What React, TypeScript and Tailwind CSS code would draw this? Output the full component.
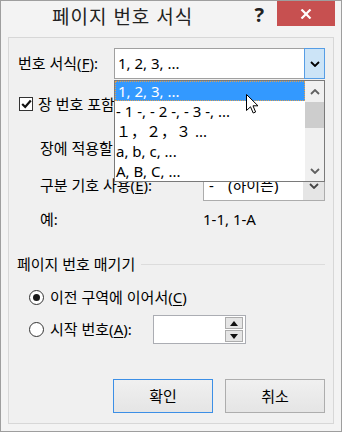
import React from "react";

const font = "font-['Noto_Sans','Noto_Sans_CJK_KR',sans-serif]";

function Chevron({ className = "", up = false }: { className?: string; up?: boolean }) {
  return (
    <svg width="10" height="6" viewBox="0 0 10 6" className={className}>
      <polyline
        points={up ? "1,5 5,1 9,5" : "1,1 5,5 9,1"}
        fill="none"
        stroke="currentColor"
        strokeWidth="1.8"
      />
    </svg>
  );
}

function Combo({ children, focused = false }: { children?: React.ReactNode; focused?: boolean }) {
  return (
    <div
      className={`flex h-[31px] flex-1 border bg-white ${
        focused ? "border-[#a0a0a0]" : "border-[#acacac]"
      }`}
    >
      <div className="flex flex-1 items-center pl-[3px] text-[15px] text-black">{children}</div>
      <div
        className={`flex w-[21px] items-center justify-center ${
          focused ? "-my-px -mr-px border border-[#569de5] bg-[#cce4f7] text-black" : "bg-[#e5e5e5] text-[#444]"
        }`}
      >
        <Chevron />
      </div>
    </div>
  );
}

function Mn({ c }: { c: string }) {
  return (
    <>
      (<span className="underline underline-offset-2">{c}</span>)
    </>
  );
}

function Cursor() {
  return (
    <svg width="13" height="20" viewBox="0 0 13 20" className="absolute left-[131px] top-[13px]">
      <path
        d="M0.5 0.5 L0.5 16.5 L4.5 12.8 L7.2 19 L9.6 18 L7 11.8 L12 11.8 Z"
        fill="white"
        stroke="black"
        strokeWidth="1"
        strokeLinejoin="round"
      />
    </svg>
  );
}

function DropList() {
  const items = ["- 1 -, - 2 -, - 3 -, ...", "１，２，３ ...", "a, b, c, ...", "A, B, C, ..."];
  return (
    <div className="absolute left-0 top-[32px] z-10 flex h-[102px] w-[211px] border border-[#7a7a7a] bg-white">
      <div className="flex flex-1 flex-col overflow-hidden text-[15px] text-black">
        <div className="flex h-[20px] items-center border border-dotted border-[#e0a050] bg-[#3399ff] pl-[2px] text-white">
          1, 2, 3, ...
        </div>
        {items.map((t) => (
          <div key={t} className="flex h-[20px] items-center pl-[1px] whitespace-pre">
            {t}
          </div>
        ))}
      </div>
      <div className="flex w-[19px] flex-col items-center bg-[#f0f0f0] text-[#606060]">
        <div className="flex h-[21px] items-center justify-center">
          <Chevron up />
        </div>
        <div className="h-[26px] w-full bg-[#cdcdcd]" />
        <div className="flex-1" />
        <div className="flex h-[21px] items-center justify-center">
          <Chevron />
        </div>
      </div>
      <Cursor />
    </div>
  );
}

function Radio({ checked }: { checked: boolean }) {
  return (
    <div className="flex h-[15px] w-[15px] items-center justify-center rounded-full border border-[#333] bg-white">
      {checked && <div className="h-[7px] w-[7px] rounded-full bg-[#1a1a1a]" />}
    </div>
  );
}

function Button({ label, primary = false }: { label: string; primary?: boolean }) {
  return (
    <div
      className={`flex h-[34px] w-[100px] items-center justify-center border bg-gradient-to-b from-[#f0f0f0] to-[#e5e5e5] text-[15px] text-black ${
        primary ? "border-[#3c8fe6]" : "border-[#adadad]"
      }`}
    >
      {label}
    </div>
  );
}

export default function App() {
  return (
    <div className={`flex h-[432px] w-[342px] flex-col border border-[#9e9e9e] bg-[#f3f3f3] ${font}`}>
      {/* title bar */}
      <div className="flex h-[36px] items-start">
        <div className="flex h-[32px] flex-1 items-center pl-[51px] text-[19px] tracking-[1px] text-[#222]">
          페이지 번호 서식
        </div>
        <div className="mr-[13px] flex h-[28px] items-center text-[20px] font-bold text-[#222]">?</div>
        <div className="mr-[6px] flex h-[25px] w-[58px] items-center justify-center bg-[#c75050]">
          <svg width="12" height="10" viewBox="0 0 12 10">
            <path d="M1.5 0.5 L10.5 9.5 M10.5 0.5 L1.5 9.5" stroke="white" strokeWidth="2.2" />
          </svg>
        </div>
      </div>

      {/* body panel */}
      <div className="mx-[7px] mb-[7px] flex flex-1 flex-col border border-[#d7d7d7] bg-[#f0f0f0] pl-[9px] pr-[8px] text-[15px] text-black">
        <div className="mt-[10px] flex items-center">
          <div className="w-[96px] shrink-0">
            번호 서식<Mn c="F" />:
          </div>
          <div className="relative flex flex-1">
            <Combo focused>1, 2, 3, ...</Combo>
            <DropList />
          </div>
        </div>

        <div className="mt-[15px] flex h-[20px] items-center gap-[5px] pl-px">
          <div className="flex h-[14px] w-[14px] items-center justify-center border border-[#333] bg-white">
            <svg width="11" height="10" viewBox="0 0 11 10">
              <path d="M1.2 5 L4.2 8 L9.8 1.5" fill="none" stroke="#111" strokeWidth="2.2" />
            </svg>
          </div>
          {/* the open list covers the rest of this label */}
          <span className="w-[76px] overflow-hidden whitespace-nowrap">장 번호 포함</span>
        </div>

        <div className="mt-[19px] flex items-center pl-[22px]">
          <div className="w-[163px] shrink-0">
            <div className="w-[74px] overflow-hidden whitespace-nowrap">장에 적용할</div>
          </div>
          <Combo />
        </div>

        <div className="mt-[6px] flex items-center pl-[22px]">
          <div className="w-[163px] shrink-0">
            구분 기호 사용<Mn c="E" />:
          </div>
          <Combo>
            <span className="ml-[2px] w-[19px]">-</span>
            <span>(하이픈)</span>
          </Combo>
        </div>

        <div className="mt-[8px] flex h-[20px] items-center pl-[22px]">
          <div className="w-[163px] shrink-0">예:</div>
          <div>1-1, 1-A</div>
        </div>

        <div className="mt-[25px] flex h-[20px] items-center gap-[6px]">
          <span className="-ml-px">페이지 번호 매기기</span>
          <div className="h-px flex-1 bg-[#dcdcdc]" />
        </div>

        <div className="mt-[13px] flex h-[20px] items-center gap-[6px] pl-[11px]">
          <Radio checked />
          <span>
            이전 구역에 이어서<Mn c="C" />
          </span>
        </div>

        <div className="mt-[8px] flex h-[29px] items-center pl-[11px]">
          <div className="flex w-[124px] items-center gap-[6px]">
            <Radio checked={false} />
            <span>
              시작 번호<Mn c="A" />:
            </span>
          </div>
          <div className="flex h-[29px] w-[93px] justify-end border border-[#abadb3] bg-white p-px pr-[2px]">
            <div className="flex w-[18px] flex-col gap-px">
              <div className="flex flex-1 items-center justify-center border border-[#acacac] bg-[#e5e5e5]">
                <svg width="8" height="5" viewBox="0 0 8 5">
                  <path d="M0 5 L4 0 L8 5 Z" fill="#111" />
                </svg>
              </div>
              <div className="flex flex-1 items-center justify-center border border-[#acacac] bg-[#e5e5e5]">
                <svg width="8" height="5" viewBox="0 0 8 5">
                  <path d="M0 0 L8 0 L4 5 Z" fill="#111" />
                </svg>
              </div>
            </div>
          </div>
        </div>

        <div className="mt-[35px] flex justify-end gap-[12px]">
          <Button label="확인" primary />
          <Button label="취소" />
        </div>
      </div>
    </div>
  );
}
